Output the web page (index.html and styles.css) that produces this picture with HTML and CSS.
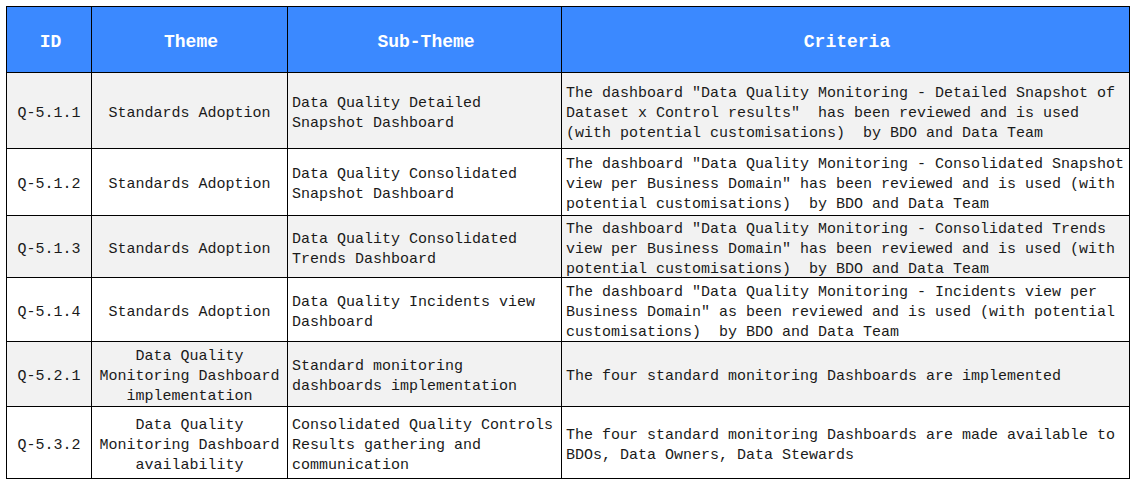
FILE: index.html
```html
<!DOCTYPE html>
<html>
<head>
<meta charset="utf-8">
<link rel="stylesheet" href="styles.css">
</head>
<body>
<table class="grid">
  <colgroup>
    <col class="c-id"><col class="c-theme"><col class="c-sub"><col class="c-crit">
  </colgroup>
  <thead>
    <tr class="h"><th>ID</th><th>Theme</th><th>Sub-Theme</th><th>Criteria</th></tr>
  </thead>
  <tbody>
    <tr class="odd r1">
      <td class="id"><div class="t">Q-5.1.1</div></td>
      <td class="theme"><div class="t">Standards Adoption</div></td>
      <td class="sub"><div class="t">Data Quality Detailed Snapshot Dashboard</div></td>
      <td class="crit"><div class="t">The dashboard "Data Quality Monitoring - Detailed Snapshot of Dataset x Control results"  has been reviewed and is used (with potential customisations)  by BDO and Data Team</div></td>
    </tr>
    <tr class="r2">
      <td class="id"><div class="t">Q-5.1.2</div></td>
      <td class="theme"><div class="t">Standards Adoption</div></td>
      <td class="sub"><div class="t">Data Quality Consolidated Snapshot Dashboard</div></td>
      <td class="crit"><div class="t">The dashboard "Data Quality Monitoring - Consolidated Snapshot view per Business Domain" has been reviewed and is used (with potential customisations)  by BDO and Data Team</div></td>
    </tr>
    <tr class="odd r3">
      <td class="id"><div class="t">Q-5.1.3</div></td>
      <td class="theme"><div class="t">Standards Adoption</div></td>
      <td class="sub"><div class="t">Data Quality Consolidated Trends Dashboard</div></td>
      <td class="crit"><div class="t">The dashboard "Data Quality Monitoring - Consolidated Trends view per Business Domain" has been reviewed and is used (with potential customisations)  by BDO and Data Team</div></td>
    </tr>
    <tr class="r4">
      <td class="id"><div class="t">Q-5.1.4</div></td>
      <td class="theme"><div class="t">Standards Adoption</div></td>
      <td class="sub"><div class="t">Data Quality Incidents view Dashboard</div></td>
      <td class="crit"><div class="t">The dashboard "Data Quality Monitoring - Incidents view per Business Domain" as been reviewed and is used (with potential customisations)  by BDO and Data Team</div></td>
    </tr>
    <tr class="odd r5">
      <td class="id"><div class="t">Q-5.2.1</div></td>
      <td class="theme"><div class="t">Data Quality Monitoring Dashboard implementation</div></td>
      <td class="sub"><div class="t">Standard monitoring dashboards implementation</div></td>
      <td class="crit"><div class="t">The four standard monitoring Dashboards are implemented</div></td>
    </tr>
    <tr class="r6">
      <td class="id"><div class="t">Q-5.3.2</div></td>
      <td class="theme"><div class="t">Data Quality Monitoring Dashboard availability</div></td>
      <td class="sub"><div class="t">Consolidated Quality Controls Results gathering and communication</div></td>
      <td class="crit"><div class="t">The four standard monitoring Dashboards are made available to BDOs, Data Owners, Data Stewards</div></td>
    </tr>
  </tbody>
</table>
</body>
</html>
```
FILE: styles.css
```css
html, body {
  margin: 0;
  padding: 0;
  background: #ffffff;
}
body {
  padding: 6px 0 0 6px;
}
.grid {
  border-collapse: collapse;
  table-layout: fixed;
  width: 1124px;
  font-family: "Liberation Mono", "Courier New", monospace;
  font-size: 15px;
  line-height: 20px;
  color: #1a1a1a;
}
.c-id { width: 85px; }
.c-theme { width: 196px; }
.c-sub { width: 274px; }
.c-crit { width: 568px; }
.grid th, .grid td {
  border: 1px solid #000;
  vertical-align: middle;
  padding: 0 1px 0 4px;
}
.grid th {
  background: #3b89ff;
  color: #fff;
  font-weight: bold;
  font-size: 18px;
  text-align: center;
  height: 66px;
  padding-top: 4px;
  box-sizing: border-box;
}
.t {
  white-space: pre-wrap;
  margin-top: 3px;
  margin-bottom: -3px;
}
.odd td { background: #f2f2f2; }
.id, .theme { text-align: center; }
.sub, .crit { text-align: left; }
.grid .id { padding-right: 4px; }
.grid .theme { padding-right: 4px; }
.r1 td { height: 75px; }
.r2 td { height: 66px; }
.r3 td { height: 61px; }
.r4 td { height: 63px; }
.r5 td { height: 64px; }
.r6 td { height: 71px; }
```
